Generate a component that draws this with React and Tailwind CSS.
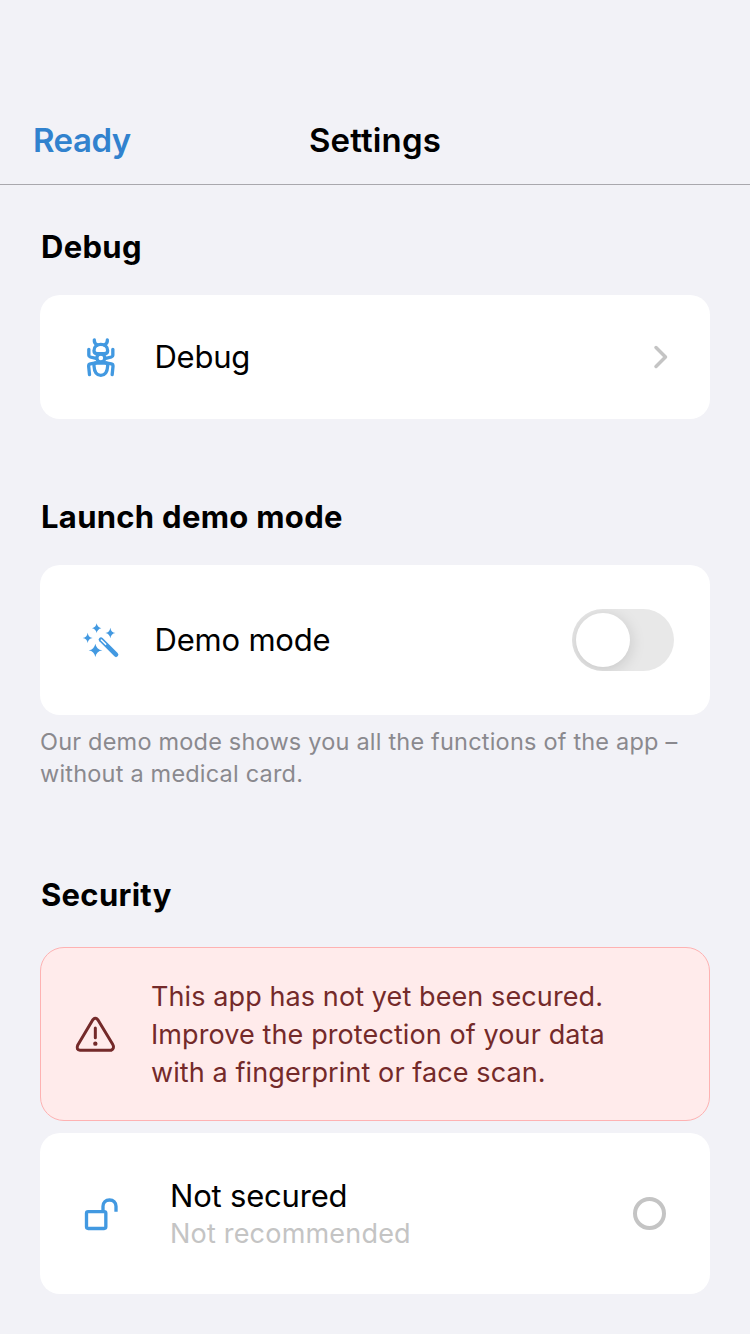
import React from "react";

function BugIcon() {
  return (
    <svg className="size-16 shrink-0" viewBox="0 0 192 192" fill="none" stroke="#4299e1" strokeWidth="10" strokeLinecap="round" strokeLinejoin="round">
      <path d="M73 45Q72 55 82 60M112 45Q113 55 103 60" />
      <path d="M83 86C76 86 72 82 72 77C72 65 81 58 92.500 58C104 58 113 65 113 77C113 82 109 86 102 86Z" />
      <circle cx="92.500" cy="99" r="12" />
      <path d="M79 114H106C111 114 113.500 117 113 123C112 141 104 151 92.500 151C81 151 73 141 72 123C71.500 117 74 114 79 114Z" />
      <path d="M56.500 73V91Q56.500 95 60.500 96L78 100M128.500 73V91Q128.500 95 124.500 96L107 100" />
      <path d="M77 114L61 116.500Q55.500 117.500 56 124L58.500 149M108 114L124 116.500Q129.500 117.500 129 124L126.500 149" />
    </svg>
  );
}

function WandIcon() {
  return (
    <svg className="mt-1 size-16 shrink-0" viewBox="0 0 192 192" fill="#4299e1">
      <path d="M80 40Q82 52 94 54.500Q82 57 80 69Q78 57 66 54.500Q78 52 80 40Z" />
      <path d="M121 53Q123 67 136 69Q123 71 121 85Q119 71 106 69Q119 67 121 53Z" />
      <path d="M53 68Q55 82 68 84Q55 86 53 99Q51 86 38 84Q51 82 53 68Z" />
      <path d="M76 101Q79 118 97 121Q79 124 76 141Q73 124 56 121Q73 118 76 101Z" />
      <path d="M93 89L138 134" fill="none" stroke="#4299e1" strokeWidth="14" strokeLinecap="round" />
      <path d="M94 90L107 103" stroke="#fff" strokeWidth="4.500" strokeLinecap="round" />
    </svg>
  );
}

function AlertIcon() {
  return (
    <svg className="mt-[6px] size-16 shrink-0" viewBox="0 0 192 192" fill="none" stroke="#742a2a" strokeWidth="9" strokeLinecap="round" strokeLinejoin="round">
      <path d="M83 45Q91 35 99 45L143 118Q150 130 138 136H45Q33 135 38 121Z" />
      <path d="M91 69V98" />
      <circle cx="91" cy="116" r="6.500" fill="#742a2a" stroke="none" />
    </svg>
  );
}

function UnlockIcon() {
  return (
    <svg className="mt-[7px] size-16 shrink-0" viewBox="0 0 192 192" fill="none" stroke="#4299e1" strokeWidth="10" strokeLinecap="butt" strokeLinejoin="round">
      <rect x="49.500" y="80" width="58" height="50.500" rx="5" />
      <path d="M99 80V64C99 52 107 45 118.500 45C130 45 138 52 138 64V80" />
    </svg>
  );
}

function SectionTitle({ children }) {
  return <h2 className="pb-px pl-px text-[31px] leading-[39px] font-bold tracking-[0.3px]">{children}</h2>;
}

export default function App() {
  return (
    <div className="flex h-[1334px] w-[750px] flex-col overflow-hidden bg-[#f2f2f7] font-['Inter','Liberation_Sans',sans-serif] text-black">
      <header className="grid h-[185px] shrink-0 grid-cols-3 items-end border-b border-[#a9a8ad] px-8 pb-6 text-[33px] leading-10 font-semibold">
        <button className="pl-px text-left tracking-[-0.5px] text-[#3182ce]">Ready</button>
        <h1 className="text-center tracking-[0.15px]">Settings</h1>
      </header>

      <main className="flex flex-col px-10">
        <section className="mt-[42px]">
          <SectionTitle>Debug</SectionTitle>
          <div className="mt-7 flex h-[124px] items-center rounded-[20px] bg-white pr-[41px] pl-[30px]">
            <BugIcon />
            <span className="ml-[20.5px] flex-1 pb-px text-[31px] leading-10 tracking-[-0.25px]">Debug</span>
            <svg className="h-6 w-[17px]" viewBox="0 0 17 24" fill="none" stroke="#c4c4c4" strokeWidth="3.500" strokeLinecap="round" strokeLinejoin="round">
              <path d="M4 2.500L13.500 12L4 21.500" />
            </svg>
          </div>
        </section>

        <section className="mt-[78px]">
          <SectionTitle>Launch demo mode</SectionTitle>
          <div className="mt-7 flex h-[150px] items-center rounded-[20px] bg-white pr-9 pl-[30px]">
            <WandIcon />
            <span className="ml-[20.5px] flex-1 pb-px text-[31px] leading-10 tracking-[-0.2px]">Demo mode</span>
            <div className="flex h-[62px] w-[102px] items-center overflow-hidden rounded-full bg-[#e8e8e8] pl-1">
              <div className="size-[54px] rounded-full bg-white shadow-[0_3px_16px_rgba(0,0,0,0.15)]" />
            </div>
          </div>
          <p className="mt-[11px] text-[23.5px] leading-8 tracking-[0.2px] whitespace-nowrap text-[#8a898e]">
            Our demo mode shows you all the functions of the app –<br />
            without a medical card.
          </p>
        </section>

        <section className="mt-[85px]">
          <SectionTitle>Security</SectionTitle>
          <div className="mt-8 flex h-[174px] items-center rounded-3xl border border-[#feb2b2] bg-[#ffebeb] pl-6">
            <AlertIcon />
            <p className="ml-[22px] pt-[2px] text-[27px] leading-[38px] tracking-[0.1px] whitespace-nowrap text-[#742a2a]">
              This app has not yet been secured.<br />
              Improve the protection of your data<br />
              with a fingerprint or face scan.
            </p>
          </div>
          <div className="mt-3 flex h-[161px] items-center rounded-[20px] bg-white pr-11 pl-[30px]">
            <UnlockIcon />
            <div className="ml-9 flex-1">
              <div className="pb-px text-[31px] leading-[39px] tracking-[-0.2px]">Not secured</div>
              <div className="text-[27px] leading-9 tracking-[0.2px] text-[#c4c4c4]">Not recommended</div>
            </div>
            <div className="size-[33px] rounded-full border-4 border-[#c4c4c4]" />
          </div>
        </section>
      </main>
    </div>
  );
}
